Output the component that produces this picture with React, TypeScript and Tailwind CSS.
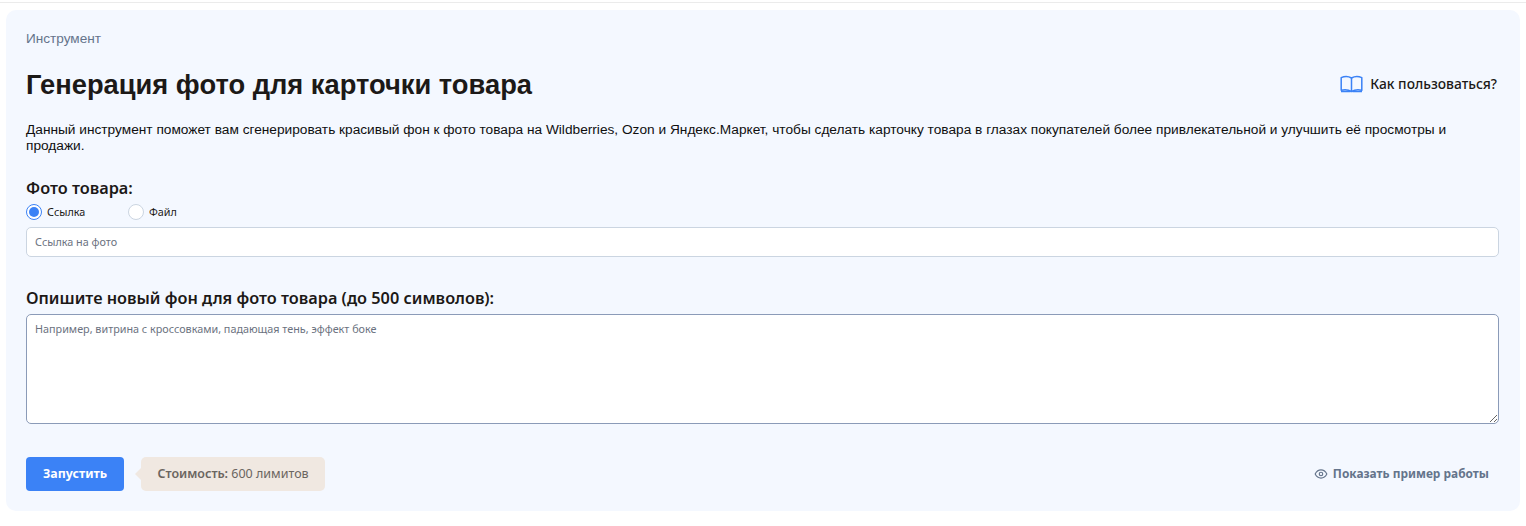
import React from "react";

const open = "font-['Noto_Sans','Open_Sans',sans-serif]";
const arial = "font-['Liberation_Sans',Arial,sans-serif]";

export default function App() {
  return (
    <div className="h-[526px] w-[1526px] overflow-hidden bg-white">
      <div className="h-[3px] border-b border-[#ebebeb]" />
      <div className="px-[6px] pt-[7px]">
        <div className="flex h-[501px] flex-col rounded-[10px] bg-[#f4f8ff] pl-[20px] pr-[21px] pt-[21px]">
          <div className={`${arial} h-[16px] text-[13.6px] leading-[16px] text-[#64748b]`}>Инструмент</div>
          <div className="mt-[20px] flex h-[36px] items-center justify-between">
            <h1 className={`${arial} text-[27.3px] font-bold leading-[36px] text-[#1c1917]`}>Генерация фото для карточки товара</h1>
            <a className={`${open} mb-[2px] mr-[2px] flex items-center gap-[7px] text-[13.8px] font-medium text-[#1c1917]`}>
              <svg width="23" height="18" viewBox="0 0 23 18" fill="none" stroke="#3b82f6" strokeWidth="1.5">
                <path d="M1.2 2.6v12.6c3.6-.9 7-.7 10.3 1.3 3.3-2 6.700-2.200 10.300-1.300V2.600C18.200 1 14.800 1 11.500 3 8.200 1 4.800 1 1.200 2.600Z" strokeLinejoin="round" />
                <path d="M11.500 3v13.500" />
                <path d="M1 16.500h9.500M12.500 16.500H22" strokeWidth="1.300" />
              </svg>
              Как пользоваться?
            </a>
          </div>
          <p className={`${arial} mt-[19px] text-[13.7px] leading-[16px] text-[#0f0f0f]`}>
            Данный инструмент поможет вам сгенерировать красивый фон к фото товара на Wildberries, Ozon и Яндекс.Маркет, чтобы сделать карточку товара в глазах покупателей более привлекательной и улучшить её просмотры и продажи.
          </p>
          <div className={`${open} mt-[24px] text-[16.3px] font-semibold leading-[20px] text-[#1c1917]`}>Фото товара:</div>
          <div className={`${open} mt-[4px] flex h-[20px] items-center text-[10.800px] text-[#1c1917]`}>
            <label className="flex w-[102px] items-center gap-[5px]">
              <span className="flex h-[16px] w-[16px] items-center justify-center rounded-full border border-[#3b82f6] bg-white">
                <span className="h-[10px] w-[10px] rounded-full bg-[#3b82f6]" />
              </span>
              Ссылка
            </label>
            <label className="flex items-center gap-[5px]">
              <span className="h-[16px] w-[16px] rounded-full border border-[#cbd5e1] bg-white" />
              Файл
            </label>
          </div>
          <input
            readOnly
            placeholder="Ссылка на фото"
            className={`${open} mt-[5px] h-[30px] w-full rounded-[5px] border border-[#cbd5e1] bg-white px-[8px] pb-[2px] text-[10.800px] outline-none placeholder:text-[#6b7280]`}
          />
          <div className={`${open} mt-[31px] text-[16.3px] font-semibold leading-[20px] text-[#1c1917]`}>Опишите новый фон для фото товара (до 500 символов):</div>
          <textarea
            readOnly
            placeholder="Например, витрина с кроссовками, падающая тень, эффект боке"
            className={`${open} mt-[6px] block h-[110px] w-full rounded-[5px] border border-[#8b9bb8] bg-white px-[8px] py-[6px] text-[10.800px] leading-[16px] outline-none placeholder:text-[#6b7280]`}
          />
          <div className="mt-[33px] flex h-[34px] items-center">
            <button className={`${open} h-[34px] w-[98px] rounded-[4px] bg-[#3b82f6] text-[12.4px] font-bold text-white`}>Запустить</button>
            <div className="relative ml-[17px] flex h-[34px] w-[184px] items-center justify-center rounded-[5px] bg-[#f0e8e1]">
              <span className="absolute left-[-6px] top-[11px] h-0 w-0 border-y-[6px] border-r-[6px] border-y-transparent border-r-[#f0e8e1]" />
              <span className={`${open} text-[12.5px] text-[#6b6560]`}><b className="font-semibold">Стоимость:</b> 600 лимитов</span>
            </div>
            <a className={`${open} ml-auto mr-[10px] flex items-center gap-[5px] text-[11.9px] font-bold text-[#64748b]`}>
              <svg width="14" height="14" viewBox="0 0 24 24" fill="none" stroke="#64748b" strokeWidth="2" strokeLinecap="round" strokeLinejoin="round">
                <path d="M2 12s3.600-7 10-7 10 7 10 7-3.600 7-10 7-10-7-10-7Z" />
                <circle cx="12" cy="12" r="3" />
              </svg>
              Показать пример работы
            </a>
          </div>
        </div>
      </div>
    </div>
  );
}
